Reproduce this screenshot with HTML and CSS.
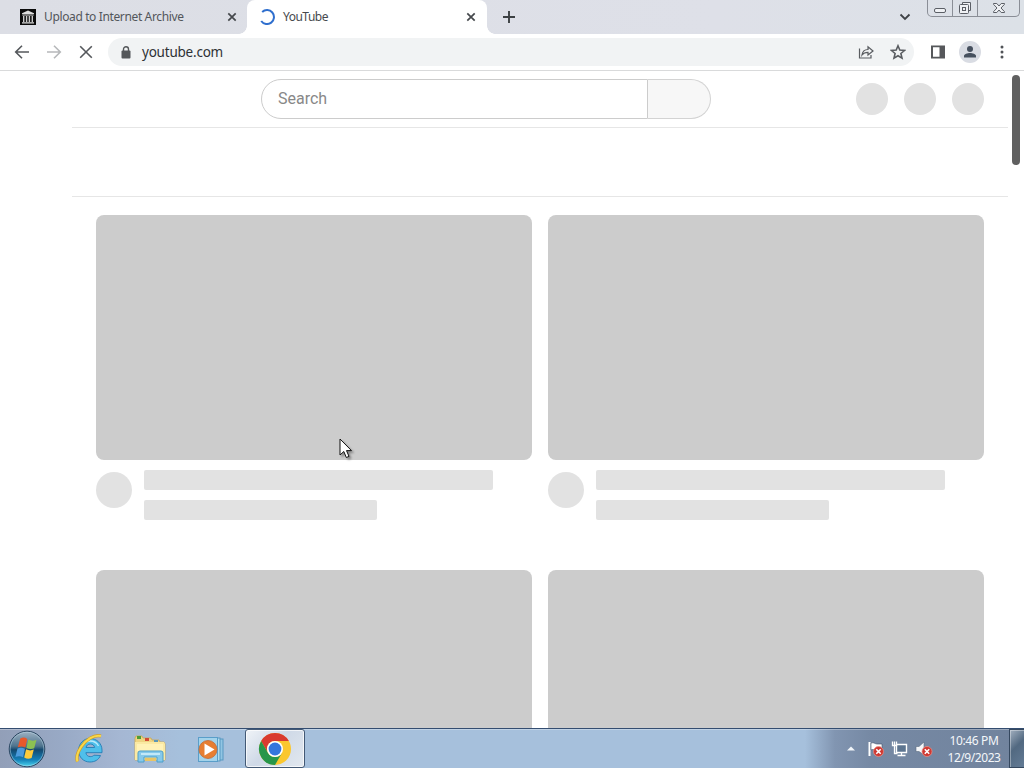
FILE: index.html
```html
<!DOCTYPE html>
<html lang="en">
<head>
    <meta charset="UTF-8">
    <meta name="viewport" content="width=device-width, initial-scale=1.0">
    <title>YouTube</title>
    <link rel="stylesheet" href="styles.css">
</head>
<body>
<div class="desktop">
    <div class="tab-strip">
        <div class="tab">
            <svg class="favicon" viewBox="0 0 16 16">
                <rect width="16" height="16" fill="#0b0b0b"/>
                <path d="M2 4.300 8 1.500l6 2.800v.7H2zM2.300 5.500h11.400v1H2.300zM2 13.300h12v1.200H2z" fill="#ddd"/>
                <path d="M3.700 7v6M6.600 7v6M9.400 7v6M12.300 7v6" stroke="#ccc" stroke-width="1.400"/>
            </svg>
            <span class="tab-title upload-title">Upload to Internet Archive</span>
            <svg class="tab-close" viewBox="0 0 10 10"><path d="M1.300 1.300l7.400 7.400M8.700 1.300L1.300 8.700"/></svg>
        </div>
        <div class="tab active">
            <svg class="favicon" viewBox="0 0 16 16">
                <path d="M3.200 2.900A7 7 0 1 1 2.200 12" fill="none" stroke="#2f6fce" stroke-width="2"/>
            </svg>
            <span class="tab-title">YouTube</span>
            <svg class="tab-close" viewBox="0 0 10 10"><path d="M1.300 1.300l7.400 7.400M8.700 1.300L1.300 8.700"/></svg>
        </div>
        <svg class="new-tab" viewBox="0 0 14 14"><path d="M7 1v12M1 7h12"/></svg>
        <svg class="tab-search" viewBox="0 0 12 8"><path d="M1.500 1.500L6 6l4.500-4.500"/></svg>
        <div class="window-controls">
            <span class="control">
                <svg viewBox="0 0 14 16"><rect x="1.500" y="8.500" width="11" height="4" rx="1.500"/></svg>
            </span>
            <span class="control">
                <svg viewBox="0 0 14 16"><path d="M4.500 4.500v-2h8v8h-2"/><rect x="1.500" y="4.500" width="9" height="9" rx="1"/><rect x="4.500" y="7.500" width="3" height="3"/></svg>
            </span>
            <span class="control close">
                <svg viewBox="0 0 14 16"><path d="M1.500 3.500h3.300L7 6l2.200-2.500h3.300v.8L9 8l3.500 3.700v.8H9.200L7 10l-2.200 2.500H1.500v-.8L5 8 1.500 4.300z"/></svg>
            </span>
        </div>
    </div>

    <div class="toolbar">
        <svg class="nav-icon" viewBox="0 0 16 16"><path d="M15 8H2M8 1.700L1.700 8 8 14.300"/></svg>
        <svg class="nav-icon disabled" viewBox="0 0 16 16"><path d="M1 8h13M8 1.700L14.300 8 8 14.300"/></svg>
        <svg class="nav-icon" viewBox="0 0 16 16"><path d="M2.200 2.200l11.600 11.600M13.800 2.200L2.200 13.800"/></svg>
        <div class="omnibox">
            <svg class="lock" viewBox="0 0 10 13">
                <rect x=".5" y="4.500" width="9" height="8" rx="1" fill="#54575a"/>
                <path d="M2.500 5V3.200a2.500 2.500 0 0 1 5 0V5" fill="none" stroke="#54575a" stroke-width="1.400"/>
            </svg>
            <span class="address">youtube.com</span>
            <svg class="box-icon" viewBox="0 0 16 16"><path d="M1.500 4.500v9.500h11.500v-3M4 11c.5-3.800 2.500-5.500 6-5.500V2.800L15 7l-5 4V8.400C7.400 8.400 5.500 9 4 11z"/></svg>
            <svg class="box-icon star" viewBox="0 0 16 16"><path d="M8 1.800l1.800 4.300 4.700.4-3.600 3 1.100 4.600L8 11.700l-4 2.400 1.100-4.600-3.600-3 4.700-.4z"/></svg>
        </div>
        <svg class="side-panel" viewBox="0 0 16 16"><path d="M1 1.500h14v13H1zM3 3.300v9.400h6.500V3.300z" fill="#56585b" fill-rule="evenodd"/></svg>
        <span class="profile">
            <svg viewBox="0 0 14 14"><circle cx="7" cy="4" r="3"/><path d="M1 12.500V11c0-2 3.500-3 6-3s6 1 6 3v1.500z"/></svg>
        </span>
        <svg class="menu-dots" viewBox="0 0 4 16"><circle cx="2" cy="3" r="1.500"/><circle cx="2" cy="8" r="1.500"/><circle cx="2" cy="13" r="1.500"/></svg>
    </div>

    <div class="page">
        <div class="content">
            <div class="masthead">
                <div class="search">
                    <span class="search-input">Search</span>
                    <span class="search-button"></span>
                </div>
                <div class="buttons">
                    <span class="round"></span>
                    <span class="round"></span>
                    <span class="round"></span>
                </div>
            </div>
            <div class="chips"></div>
            <div class="grid">
                <div class="video">
                    <div class="thumbnail"></div>
                    <div class="details">
                        <span class="channel"></span>
                        <div class="lines"><span class="line"></span><span class="line short"></span></div>
                    </div>
                </div>
                <div class="video">
                    <div class="thumbnail"></div>
                    <div class="details">
                        <span class="channel"></span>
                        <div class="lines"><span class="line"></span><span class="line short"></span></div>
                    </div>
                </div>
                <div class="video"><div class="thumbnail"></div></div>
                <div class="video"><div class="thumbnail"></div></div>
            </div>
        </div>
        <div class="scrollbar"><div class="thumb"></div></div>
    </div>

    <div class="taskbar">
        <svg class="start" viewBox="0 0 38 38">
            <defs>
                <linearGradient id="orb" x1="0" y1="0" x2="0" y2="1">
                    <stop offset="0" stop-color="#9fb3c4"/>
                    <stop offset=".42" stop-color="#4d738d"/>
                    <stop offset=".52" stop-color="#14496f"/>
                    <stop offset=".8" stop-color="#1480b8"/>
                    <stop offset="1" stop-color="#4dd9f2"/>
                </linearGradient>
            </defs>
            <circle cx="19" cy="19" r="17.800" fill="url(#orb)" stroke="#2a4560" stroke-width="1"/>
            <circle cx="19" cy="19" r="16.800" fill="none" stroke="#b7d5e6" stroke-opacity=".5"/>
            <path d="M12.300 8.500c2.700-1.500 4.900-1 7 .4l-2 8.600c-2.500-1.300-4.700-1.500-7.500-.3z" fill="#e8592b"/>
            <path d="M20.300 9.500c2.700 1.400 5.200 1.600 8.200.2l-2.300 8.600c-2.600 1.100-5.200.9-7.800-.4z" fill="#8cc152"/>
            <path d="M9.500 18.500c2.800-1.300 5.100-.9 7.500.3l-2 8.500c-2.400-1.300-4.800-1.400-7.600-.2z" fill="#4b9bdc"/>
            <path d="M18.100 19.300c2.500 1.300 5 1.500 7.700.3l-2.200 8.400c-2.600 1.300-5 .9-7.400-.4z" fill="#fccb3c"/>
        </svg>
        <span class="task">
            <svg class="explorer" viewBox="0 0 32 32">
                <path d="M27.500 22.500C25.500 27 21.800 29 16.900 29c-6.400 0-11.300-4.900-11.300-11.500S10.300 5.500 16.900 5.500C23.500 5.500 29 10.300 29 17.200v2.500H12.900c.3 2.400 2 3.900 4.400 3.900 1.600 0 2.900-.4 3.600-1.400zM13 14.500h8.600c-.4-2.100-1.900-3.500-4.200-3.500-2.300 0-4 1.300-4.400 3.500z" fill="#4fbfea" stroke="#247cb4" stroke-width=".9"/>
                <path d="M8 15.500c1.500-4.500 4.500-7.500 9-7.500 4 0 7 2 8.500 5" fill="none" stroke="#bceafb" stroke-width="1.300"/>
                <path d="M28 3c-7-1.500-15 3.500-20 11C4.500 19.500 3 25 4.500 28.500" fill="none" stroke="#d39d22" stroke-width="3.200"/>
                <path d="M28 3c-7-1.500-15 3.500-20 11C4.500 19.500 3 25 4.500 28.500" fill="none" stroke="#f8d84b" stroke-width="2.100"/>
            </svg>
        </span>
        <span class="task">
            <svg class="folder" viewBox="0 0 34 32">
                <path d="M2 5l1-2h6l1 2h8l1 2h7l1 2h4l1 2v16H2z" fill="#efd583" stroke="#c9a653" stroke-width=".8"/>
                <path d="M4 3h4v3H4z" fill="#4d9d37"/><path d="M12 5h4v3h-4z" fill="#d34b35"/><path d="M21 7h4v3h-4z" fill="#5c98b6"/>
                <path d="M2 9h29l1 2v16H2z" fill="#fae9a3"/>
                <path d="M4 11h26v7H4z" fill="#fff2b7"/>
                <path d="M5 29V20q0-2 2-2h21q2 0 2 2v9h-6v-5H11v5z" fill="#86c9ea" stroke="#4d9fca"/>
                <path d="M8 20h19v2H8z" fill="#c2e8f8"/><path d="M12 25h11v3H12z" fill="#e9c565"/>
            </svg>
        </span>
        <span class="task">
            <svg class="media" viewBox="0 0 32 32">
                <rect x="10" y="6" width="18" height="21" fill="#91c5e3" stroke="#5798c1"/>
                <rect x="7" y="5" width="18" height="23" fill="#b2dced" stroke="#5798c1"/>
                <rect x="3.500" y="4.500" width="19" height="24" fill="#a3d3eb" stroke="#5a9ec9"/>
                <circle cx="13" cy="16.500" r="9" fill="#e77e31" stroke="#c26a34" stroke-width=".8"/>
                <path d="M9.500 10.500v12l10-6z" fill="#fff"/>
            </svg>
        </span>
        <span class="task running">
            <svg class="chrome" viewBox="0 0 34 34">
                <circle cx="17" cy="17" r="16" fill="#fbc72e"/>
                <path d="M3.140 9A16 16 0 0 1 30.860 9H17a8 8 0 0 0-6.930 12z" fill="#d93a2f"/>
                <path d="M3.140 9A16 16 0 0 0 17 33l6.930-12a8 8 0 0 1-13.860 0z" fill="#27964a"/>
                <circle cx="17" cy="17" r="8" fill="#fff"/>
                <circle cx="17" cy="17" r="6.400" fill="#3476dc"/>
            </svg>
        </span>
        <div class="tray">
            <svg class="tray-arrow" viewBox="0 0 8 5"><path d="M0 4.500L4 .5l4 4z" fill="#f2f6fa"/></svg>
            <svg class="tray-icon" viewBox="0 0 18 18">
                <path d="M2.500 2v14" stroke="#fff" stroke-width="2"/>
                <path d="M4 3c3-1 4 1 6 1h5v6H9c-2 0-3-1-5 0z" fill="#fff" stroke="#43536a" stroke-width=".6"/>
                <circle cx="11.500" cy="11.500" r="5" fill="#cf3831" stroke="#ef9185" stroke-width=".7"/>
                <path d="M9.300 9.300l4.400 4.400M13.700 9.300l-4.400 4.400" stroke="#fff" stroke-width="1.600"/>
            </svg>
            <svg class="tray-icon" viewBox="0 0 18 18">
                <path d="M5.500 4.500h10v8h-10z" fill="#5d7590" stroke="#fff" stroke-width="1.400"/>
                <path d="M10.500 13v2M6.500 15.500h8M1.500 1.500v4h4v-4M3.500 1.500v12h3" fill="none" stroke="#fff" stroke-width="1.300"/>
            </svg>
            <svg class="tray-icon" viewBox="0 0 18 18">
                <path d="M1 6.500h3l5-4.500v13L4 11.500H1z" fill="#f4f6f8" stroke="#5a6b7f" stroke-width=".6"/>
                <circle cx="12" cy="11.500" r="5" fill="#cf3831" stroke="#ef9185" stroke-width=".7"/>
                <path d="M9.800 9.300l4.400 4.400M14.200 9.300l-4.400 4.400" stroke="#fff" stroke-width="1.600"/>
            </svg>
            <div class="clock"><span>10:46 PM</span><span class="date">12/9/2023</span></div>
        </div>
        <div class="show-desktop"></div>
    </div>

    <svg class="cursor" viewBox="0 0 14 21"><path d="M1 1v16l3.800-3.500 2.500 6 2.700-1.100-2.500-5.800H12.500z"/></svg>
</div>
</body>
</html>
```
FILE: styles.css
```css
* {
    margin: 0;
    padding: 0;
    box-sizing: border-box;
}

body {
    font-family: 'Noto Sans', 'Open Sans', sans-serif;
    background: #fff;
    overflow: hidden;
}

svg {
    display: block;
    flex-shrink: 0;
}

.desktop {
    position: relative;
    width: 1024px;
    height: 768px;
    display: flex;
    flex-direction: column;
}

/* tabs */
.tab-strip {
    height: 34px;
    display: flex;
    align-items: center;
    padding-left: 7px;
    background: linear-gradient(90deg, #dcdee5, #dee0e8 70%, #dce1e7);
}

.tab {
    position: relative;
    width: 240px;
    height: 34px;
    display: flex;
    align-items: center;
    padding: 0 10px 0 13px;
    color: #53565b;
}

.tab.active {
    background: #fff;
    border-radius: 8px 8px 0 0;
    padding-left: 12px;
    padding-right: 11px;
    color: #46494d;
}

.tab.active::before,
.tab.active::after {
    content: '';
    position: absolute;
    bottom: 0;
    width: 8px;
    height: 8px;
}

.tab.active::before {
    left: -8px;
    background: radial-gradient(circle at 0 0, transparent 7.5px, #fff 8px);
}

.tab.active::after {
    right: -8px;
    background: radial-gradient(circle at 100% 0, transparent 7.5px, #fff 8px);
}

.favicon {
    width: 16px;
    height: 16px;
}

.tab-title {
    flex: 1;
    margin-left: 8px;
    font-size: 12px;
    line-height: 16px;
    white-space: nowrap;
    letter-spacing: -0.5px;
}

.upload-title {
    letter-spacing: -0.37px;
}

.tab-close {
    width: 10px;
    height: 10px;
    fill: none;
    stroke: #45484c;
    stroke-width: 1.7;
}

.new-tab {
    width: 14px;
    height: 14px;
    margin-left: 15px;
    fill: none;
    stroke: #3c4043;
    stroke-width: 1.9;
}

.tab-search {
    width: 12px;
    height: 8px;
    margin-left: auto;
    margin-right: 16px;
    fill: none;
    stroke: #3f4246;
    stroke-width: 1.8;
}

.window-controls {
    align-self: flex-start;
    width: 93px;
    height: 17px;
    margin-right: 4px;
    display: flex;
    border: 1px solid #8a8e96;
    border-top: none;
    border-radius: 0 0 5px 5px;
    overflow: hidden;
}

.control {
    width: 25px;
    height: 16px;
    display: flex;
    justify-content: center;
    border-right: 1px solid #8a8e96;
}

.control.close {
    flex: 1;
    border-right: none;
}

.control svg {
    width: 14px;
    height: 16px;
    fill: #eff1f4;
    stroke: #5b5f66;
    stroke-width: 1;
}

/* toolbar */
.toolbar {
    height: 37px;
    display: flex;
    align-items: center;
    padding: 0 12px 0 14px;
    background: #fff;
    border-bottom: 1px solid #d9dadb;
}

.nav-icon {
    width: 16px;
    height: 16px;
    margin-right: 16px;
    fill: none;
    stroke: #55585c;
    stroke-width: 1.6;
}

.nav-icon.disabled {
    stroke: #b6b8ba;
}

.omnibox {
    width: 806px;
    height: 28px;
    margin-left: -2px;
    display: flex;
    align-items: center;
    padding: 0 8px 0 13px;
    background: #f1f3f4;
    border-radius: 14px;
}

.lock {
    width: 10px;
    height: 13px;
}

.address {
    flex: 1;
    margin-left: 11px;
    font-size: 13.5px;
    line-height: 20px;
    letter-spacing: -0.22px;
    color: #2e3135;
}

.box-icon {
    width: 16px;
    height: 16px;
    margin-left: 16px;
    fill: none;
    stroke: #595c60;
    stroke-width: 1.2;
}

.box-icon.star {
    stroke-width: 1.6;
}

.side-panel {
    width: 16px;
    height: 16px;
    margin-left: 16px;
}

.profile {
    width: 22px;
    height: 22px;
    margin-left: 13px;
    display: flex;
    align-items: center;
    justify-content: center;
    border-radius: 50%;
    background: #d9dce3;
}

.profile svg {
    width: 14px;
    height: 14px;
    fill: #46505e;
}

.menu-dots {
    width: 4px;
    height: 16px;
    margin-left: 19px;
    fill: #505357;
}

/* page skeleton */
.page {
    height: 657px;
    display: flex;
    justify-content: space-between;
    padding-left: 72px;
    overflow: hidden;
}

.content {
    width: 936px;
}

.masthead {
    height: 57px;
    display: flex;
    justify-content: space-between;
    align-items: center;
    padding: 0 24px 0 189px;
    border-bottom: 1px solid #e6e6e6;
}

.search {
    width: 450px;
    height: 40px;
    display: flex;
}

.search-input {
    width: 387px;
    padding-left: 16px;
    font-family: Roboto, sans-serif;
    font-size: 16px;
    line-height: 38px;
    color: #888;
    border: 1px solid #ccc;
    border-radius: 20px 0 0 20px;
}

.search-button {
    flex: 1;
    background: #f7f7f7;
    border: 1px solid #d3d3d3;
    border-left: none;
    border-radius: 0 20px 20px 0;
}

.buttons {
    display: flex;
    gap: 16px;
}

.round {
    width: 32px;
    height: 32px;
    border-radius: 50%;
    background: #e2e2e2;
}

.chips {
    height: 69px;
    border-bottom: 1px solid #e6e6e6;
}

.grid {
    display: grid;
    grid-template-columns: 436px 436px;
    grid-auto-rows: 355px;
    column-gap: 16px;
    padding: 18px 24px 0;
}

.thumbnail {
    height: 245px;
    border-radius: 8px;
    background: #ccc;
}

.details {
    display: flex;
    gap: 12px;
    padding-top: 10px;
}

.channel {
    width: 36px;
    height: 36px;
    margin-top: 2px;
    border-radius: 50%;
    background: #e2e2e2;
}

.lines {
    display: flex;
    flex-direction: column;
    gap: 10px;
}

.line {
    width: 349px;
    height: 20px;
    border-radius: 2px;
    background: #e2e2e2;
}

.line.short {
    width: 233px;
}

.scrollbar {
    width: 12px;
    padding-top: 4px;
}

.thumb {
    width: 8px;
    height: 90px;
    border-radius: 4px;
    background: #606060;
}

/* taskbar */
.taskbar {
    height: 40px;
    display: flex;
    align-items: center;
    padding-left: 8px;
    border-top: 1px solid #344d70;
    background: linear-gradient(90deg, #929fb8 0, #98a9c5 60px, #a5b7d3 120px, #a6c0dc 180px, #a6c0dc 805px, #8195b1 835px, #7689a4 870px, #71839d 1024px);
    box-shadow: inset 0 1px rgba(255, 255, 255, 0.3);
}

.start {
    width: 38px;
    height: 38px;
    margin-right: 13px;
}

.task {
    width: 60px;
    height: 39px;
    display: flex;
    align-items: center;
    justify-content: center;
    margin-right: 1px;
}

.task svg {
    width: 32px;
    height: 32px;
}

.task .folder {
    width: 34px;
}

.task .chrome {
    width: 34px;
    height: 34px;
}

.task.running {
    margin-left: 3px;
    border: 1px solid #435975;
    border-radius: 3px;
    background: linear-gradient(135deg, #f0f4f8, #cfd9e7 45%, #e2e8ef);
    box-shadow: inset 0 0 0 1px rgba(255, 255, 255, 0.7);
}

.tray {
    margin-left: auto;
    display: flex;
    align-items: center;
}

.tray-arrow {
    width: 8px;
    height: 5px;
    margin-right: 12px;
}

.tray-icon {
    width: 18px;
    height: 18px;
    margin-right: 6px;
}

.clock {
    width: 70px;
    display: flex;
    flex-direction: column;
    align-items: center;
    font-size: 12px;
    line-height: 17px;
    letter-spacing: -0.35px;
    color: #f4f7fa;
}

.date {
    letter-spacing: -0.45px;
}

.show-desktop {
    width: 15px;
    height: 39px;
    border: 1px solid #35485f;
    border-right: none;
    background: linear-gradient(135deg, #a2afbf, #526981 45%, #637b95);
    box-shadow: inset 1px 1px rgba(255, 255, 255, 0.35);
}

/* mouse pointer above the page */
.cursor {
    position: absolute;
    left: 339px;
    top: 438px;
    width: 14px;
    height: 21px;
    fill: #fff;
    stroke: #111;
    stroke-width: 1;
    filter: drop-shadow(2px 2px 1px rgba(0, 0, 0, 0.35));
}
```
